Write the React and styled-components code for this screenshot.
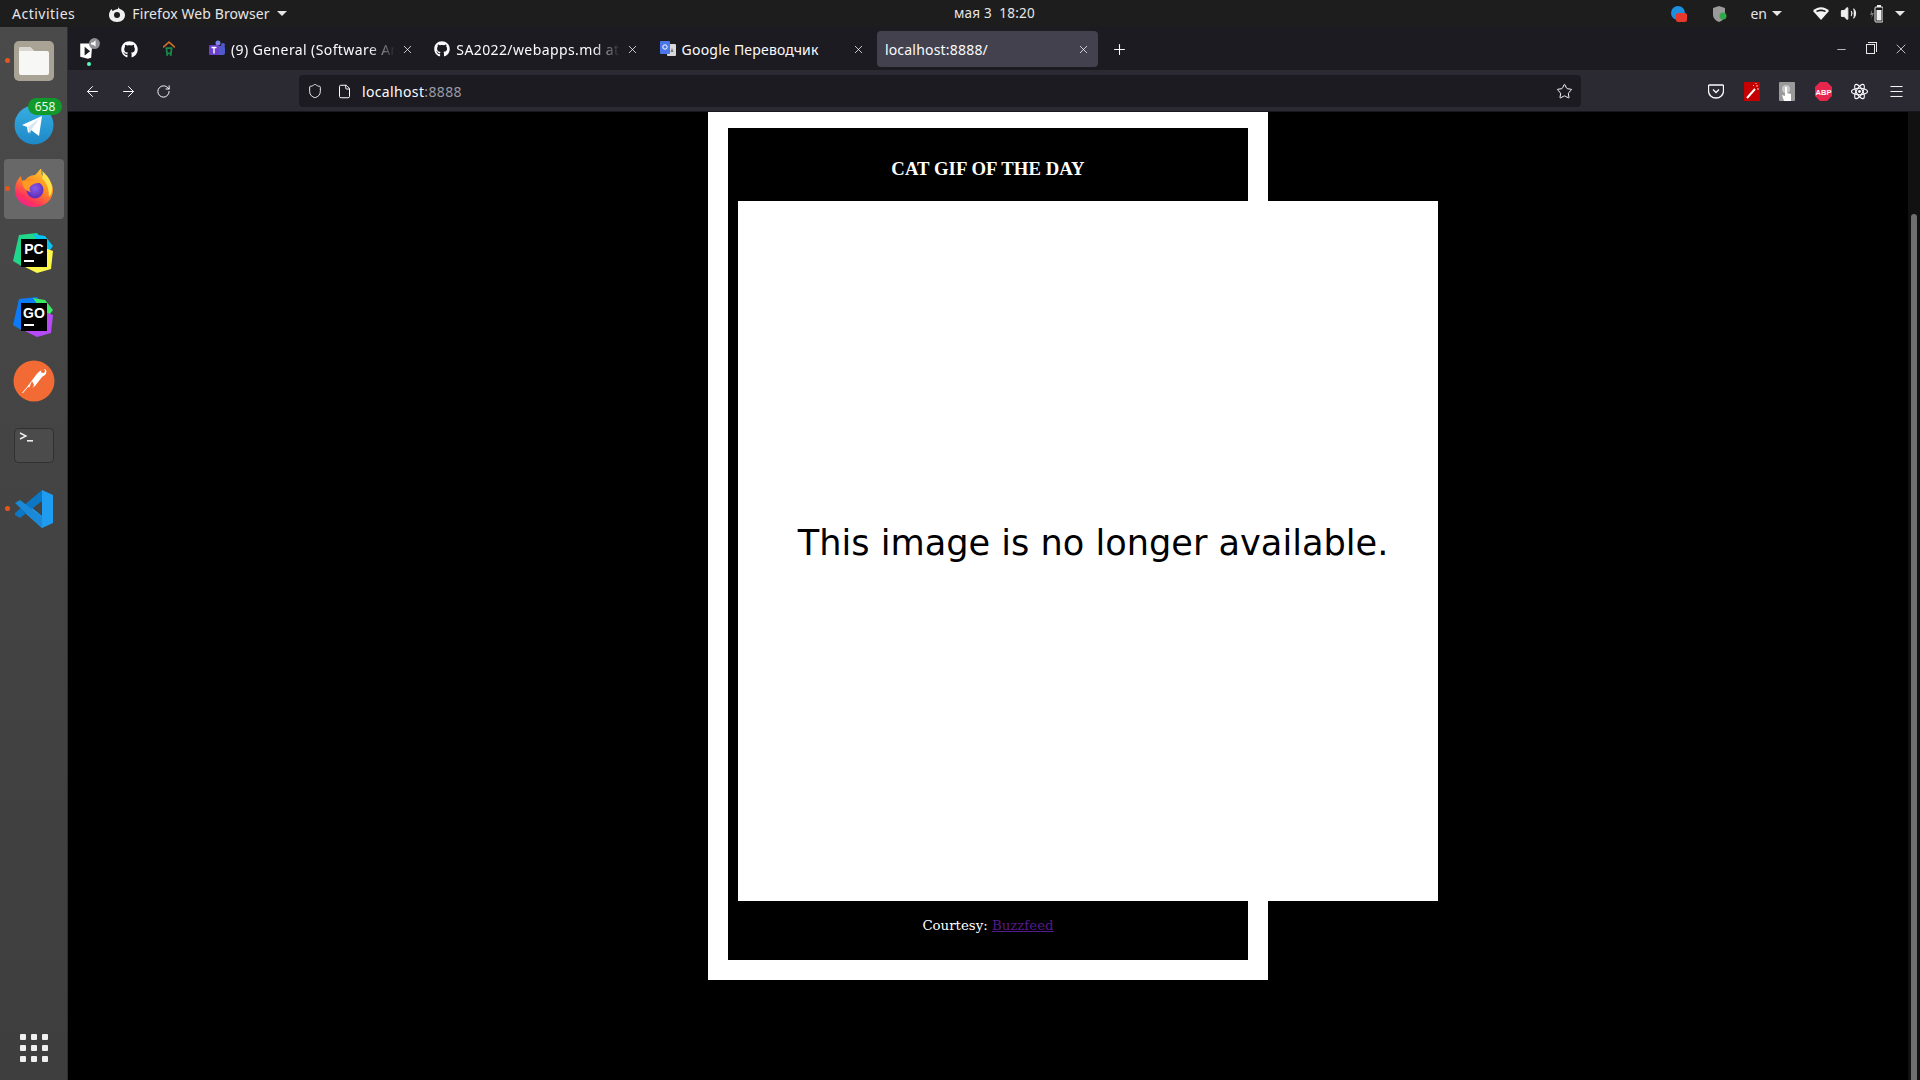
import styled, { createGlobalStyle } from "styled-components";
import { ArrowLeft, ArrowRight, RotateCw, Shield, File, Star, Menu, X, Plus, Minus, Volume2 } from "lucide-react";
import { FaGithub } from "react-icons/fa";

const GlobalStyle = createGlobalStyle`
  html, body { margin: 0; height: 100%; background: #000; overflow: hidden; }
  #root { height: 100%; }
  * { box-sizing: border-box; }
`;

const Screen = styled.div`
  width: 1920px;
  height: 1080px;
  display: flex;
  flex-direction: column;
  font-family: "Noto Sans", sans-serif;
  color: #fff;
`;

const TopBar = styled.div`
  height: 27px;
  flex: none;
  background: #1d1d1d;
  color: #e6e6e6;
  font-size: 14px;
  display: grid;
  grid-template-columns: 1fr 1fr;
  align-items: center;
  position: relative;
  padding: 0 15px 0 12px;
`;

const TopLeft = styled.div`
  display: flex;
  align-items: center;
  letter-spacing: 0.1px;
`;

const Activities = styled.span`
  letter-spacing: 0.5px;
`;

const TopRight = styled.div`
  display: flex;
  align-items: center;
  justify-content: flex-end;
`;

const AppName = styled.div`
  display: flex;
  align-items: center;
  gap: 7px;
  margin-left: 34px;
`;

const Clock = styled.div`
  position: absolute;
  left: 954px;
  top: 4px;
  font-size: 13.5px;
  letter-spacing: 0.2px;
  white-space: pre;
`;

const Caret = styled.span`
  width: 0;
  height: 0;
  border-left: 5px solid transparent;
  border-right: 5px solid transparent;
  border-top: 5px solid #e6e6e6;
  margin-left: ${(p) => p.$left || 0}px;
`;

const TrayItem = styled.div`
  display: flex;
  align-items: center;
  margin-left: ${(p) => p.$left}px;
`;

const Body = styled.div`
  flex: 1;
  display: flex;
  min-height: 0;
`;

const Dock = styled.div`
  width: 68px;
  flex: none;
  background: linear-gradient(#4a4a4a, #444 40%, #3e3e3e);
  border-right: 1px solid #2f2f2f;
  padding-top: 2px;
  display: flex;
  flex-direction: column;
  align-items: center;
`;

const DockSlot = styled.div`
  width: 60px;
  height: 60px;
  flex: none;
  margin: 2px 0 2px 1px;
  display: flex;
  align-items: center;
  justify-content: center;
  position: relative;
  border-radius: 4px;
  background: ${(p) => (p.$active ? "#686868" : "transparent")};
`;

const RunDot = styled.span`
  position: absolute;
  left: 1px;
  top: 50%;
  width: 5px;
  height: 5px;
  margin-top: -3px;
  border-radius: 50%;
  background: #e9541f;
`;

const Badge = styled.span`
  position: absolute;
  left: 24px;
  top: 3px;
  width: 34px;
  height: 17px;
  border-radius: 8.5px;
  background: #109a2c;
  color: #e8ffe8;
  font-size: 12px;
  line-height: 17px;
  text-align: center;
`;

const AppsGrid = styled.div`
  margin-top: auto;
  margin-bottom: 18px;
  display: grid;
  grid-template-columns: repeat(3, 6px);
  gap: 5px;
`;

const AppsDot = styled.span`
  width: 6px;
  height: 6px;
  border-radius: 1px;
  background: #f0f0f0;
`;

const Browser = styled.div`
  flex: 1;
  min-width: 0;
  display: flex;
  flex-direction: column;
`;

const TabStrip = styled.div`
  height: 43px;
  flex: none;
  background: #1c1b22;
  display: flex;
  align-items: center;
  padding: 1px 0 0 1px;
  font-size: 14px;
  letter-spacing: 0.15px;
  color: #fbfbfe;
`;

const PinnedTab = styled.div`
  width: 40px;
  height: 36px;
  flex: none;
  display: flex;
  align-items: center;
  justify-content: center;
  position: relative;
`;

const AudioDot = styled.span`
  position: absolute;
  left: 18px;
  bottom: 1px;
  width: 4px;
  height: 4px;
  border-radius: 50%;
  background: #54ffbd;
`;

const Tab = styled.div`
  width: 221px;
  height: 36px;
  flex: none;
  margin-left: ${(p) => (p.$first ? 12 : 0)}px;
  margin-right: 4.3px;
  padding: 0 8px 0 ${(p) => (p.$active ? 8 : 8)}px;
  display: flex;
  align-items: center;
  gap: 6px;
  border-radius: 4px;
  background: ${(p) => (p.$active ? "#42414d" : "transparent")};
`;

const TabTitle = styled.span`
  flex: 1;
  min-width: 0;
  white-space: nowrap;
  letter-spacing: ${(p) => (p.$fade ? 0.4 : 0.2)}px;
  mask-image: ${(p) => (p.$fade ? "linear-gradient(to right, #000 84%, transparent 100%)" : "none")};
`;

const NewTab = styled.div`
  margin-left: 9px;
  display: flex;
  align-items: center;
`;

const WindowButtons = styled.div`
  margin-left: auto;
  display: flex;
  align-items: center;
  gap: 18px;
  padding-right: 11px;
`;

const RestoreIcon = styled.span`
  width: 9px;
  height: 10px;
  border: 1px solid #e8e8e8;
  position: relative;
  &::after {
    content: "";
    position: absolute;
    left: 1px;
    top: -3px;
    width: 8px;
    height: 9px;
    border-top: 1px solid #e8e8e8;
    border-right: 1px solid #e8e8e8;
  }
`;

const Toolbar = styled.div`
  height: 42px;
  flex: none;
  background: #2b2a33;
  border-bottom: 1px solid #17161b;
  display: flex;
  align-items: center;
  padding: 1px 0 0 16px;
  color: #fbfbfe;
`;

const NavGroup = styled.div`
  display: flex;
  align-items: center;
  gap: 19px;
  margin-right: 128px;
`;

const UrlBar = styled.div`
  width: 1282px;
  height: 32px;
  flex: none;
  border-radius: 4px;
  background: #1c1b22;
  display: flex;
  align-items: center;
  padding: 0 8px;
  gap: 14px;
  font-size: 14px;
`;

const UrlText = styled.div`
  flex: 1;
  margin-left: -4px;
  letter-spacing: 0.35px;
  color: #fbfbfe;
`;

const Port = styled.span`
  color: #9a9aa3;
`;

const Extensions = styled.div`
  display: flex;
  align-items: center;
  margin-left: 127px;
  gap: 19.5px;
`;

const PageRow = styled.div`
  flex: 1;
  min-height: 0;
  display: flex;
  background: #000;
`;

const Page = styled.main`
  flex: 1;
  min-width: 0;
  display: flex;
  justify-content: center;
  align-items: flex-start;
`;

const Card = styled.section`
  width: 560px;
  border: 20px solid #fff;
  border-top-width: 16px;
  background: #000;
`;

const Title = styled.h1`
  margin: 0;
  height: 73px;
  padding-top: 30px;
  text-align: center;
  letter-spacing: 0.06px;
  font: bold 18.72px/22px "Liberation Serif", serif;
`;

const Missing = styled.div`
  width: 700px;
  height: 700px;
  margin-left: 10px;
  padding: 0 0 18px 10px;
  background: #fff;
  color: #000;
  display: flex;
  align-items: center;
  justify-content: center;
  font: 35.15px "DejaVu Sans", sans-serif;
  white-space: nowrap;
`;

const Footer = styled.footer`
  height: 59px;
  padding-top: 17px;
  text-align: center;
  font: 13.33px/16px "DejaVu Serif", serif;
`;

const SourceLink = styled.a`
  color: #551a8b;
`;

const Scrollbar = styled.div`
  width: 12px;
  flex: none;
  background: #111;
  padding: 102px 3px 0;
`;

const Thumb = styled.div`
  height: 100%;
  background: #6f6f6f;
  border-radius: 3px 3px 0 0;
`;

const FirefoxLogo = ({ size = 40 }) => (
  <svg width={size} height={size} viewBox="0 1 40 40">
    <defs>
      <linearGradient id="ffBody" x1="0.8" y1="0" x2="0.2" y2="1">
        <stop offset="0" stopColor="#ffd23a" />
        <stop offset="0.45" stopColor="#ff8a1f" />
        <stop offset="0.8" stopColor="#ff3160" />
        <stop offset="1" stopColor="#e5209a" />
      </linearGradient>
      <radialGradient id="ffCore" cx="0.5" cy="0.4" r="0.6">
        <stop offset="0" stopColor="#8a5ce8" />
        <stop offset="1" stopColor="#5b2bb5" />
      </radialGradient>
    </defs>
    <path d="M27 0c1 3 0 5 1 7 5 3 11 7 11 15 0 10-8 17-19 17C9 39 1 32 1 22 1 16 3 12 7 8c0 3 1 5 3 6 2-4 6-7 11-7 2-2 4-4 6-7z" fill="url(#ffBody)" />
    <circle cx="21" cy="22" r="8.5" fill="url(#ffCore)" />
    <path d="M8 13c3-2 5 1 8 1 5-3 10-2 13 2-4-2-8-1-11 1-3 2-3 5-1 7-5-1-9-5-9-11z" fill="#ff9a24" />
    <path d="M28 3c5 4 10 10 10 18 0 3-1 6-3 8 0-8-2-14-7-19 1-2 1-4 0-7z" fill="#ffe14a" />
  </svg>
);

const FilesLogo = () => (
  <svg width="40" height="40" viewBox="0 0 40 40">
    <rect width="40" height="40" rx="5" fill="#a8a394" />
    <path d="M5 8a2 2 0 0 1 2-2h9l4 4h13a2 2 0 0 1 2 2v20a2 2 0 0 1-2 2H7a2 2 0 0 1-2-2z" fill="#f7f7f5" />
    <path d="M5 8a2 2 0 0 1 2-2h9l4 4H5z" fill="#d9d7d0" />
  </svg>
);

const TelegramLogo = () => (
  <svg width="40" height="40" viewBox="0 0 40 40">
    <defs>
      <linearGradient id="tgBg" x1="0.5" y1="0" x2="0.5" y2="1">
        <stop offset="0" stopColor="#37aee2" />
        <stop offset="1" stopColor="#1e88c7" />
      </linearGradient>
    </defs>
    <circle cx="20" cy="20" r="19.5" fill="url(#tgBg)" />
    <path d="M8 20l20-9-3 20-8-6-3 3-1-6z" fill="#fff" />
    <path d="M14 22l11-8-8 11-1 4z" fill="#d5e6f0" />
  </svg>
);

const IdeLogo = ({ label, a, b, c }) => (
  <svg width="42" height="44" viewBox="0 0 42 44">
    <path d="M6 4l18-2 6 8-6 24-14 2L0 30z" fill={a} />
    <path d="M20 3l12 2 8 10-6 8z" fill={b} />
    <path d="M24 14l16 6-2 18-14 4-12-6z" fill={c} />
    <rect x="8" y="8" width="26" height="28" fill="#000" />
    <text x="21" y="23" textAnchor="middle" fontFamily="Liberation Sans, sans-serif" fontWeight="700" fontSize="14" fill="#fff">{label}</text>
    <rect x="11" y="29" width="10" height="2" fill="#fff" />
  </svg>
);

const PostmanLogo = () => (
  <svg width="42" height="42" viewBox="0 0 42 42">
    <circle cx="21" cy="21" r="20.5" fill="#f26b34" />
    <path d="M9 33l5-6 9-12c2-3 5-5 8-6 3 0 3 4 1 6l-3 2-7 9-3 2-4-1-5 6z" fill="#fff" />
    <path d="M16 28l3-7 2 4-2 4z" fill="#f26b34" />
    <circle cx="30" cy="11" r="2" fill="#f26b34" />
  </svg>
);

const TerminalLogo = () => (
  <svg width="40" height="35" viewBox="0 0 40 35">
    <rect x="0.5" y="0.5" width="39" height="34" rx="4" fill="#4b4b4b" stroke="#303030" />
    <path d="M6 5l6 3-6 3" fill="none" stroke="#eee" strokeWidth="1.4" />
    <rect x="13" y="12" width="6" height="1.6" fill="#eee" />
  </svg>
);

const VsCodeLogo = () => (
  <svg width="40" height="38" viewBox="0 0 40 38">
    <path d="M28 0l11 5v28l-11 5-18-16 7-5 11 9V11z" fill="#1f9cf0" />
    <path d="M28 0v11L6 28l-5-3v-2z" fill="#0c77c4" />
    <path d="M1 13l5-3 22 17v11z" fill="#1a8ad8" />
  </svg>
);

const FirefoxMark = () => (
  <svg width="16" height="16" viewBox="0 0 16 16">
    <path d="M9 0c0 2 1 2 2 3 3 1 5 3 5 6 0 4-3 7-8 7s-8-3-8-7c0-2 1-5 3-6 0 1 0 2 1 2 1-1 3-2 5-2z" fill="#f0f0f0" />
    <circle cx="8" cy="9" r="3" fill="#1d1d1d" />
  </svg>
);

const TrayBrowser = () => (
  <svg width="16" height="18" viewBox="0 0 16 18">
    <circle cx="7" cy="8" r="7" fill="#1d8fe1" />
    <rect x="5" y="8" width="11" height="9" rx="2" fill="#e8392f" />
  </svg>
);

const TrayShield = () => (
  <svg width="14" height="18" viewBox="0 0 14 18">
    <path d="M6 1l6 2v7c0 3-3 6-6 7-3-1-6-4-6-7V3z" fill="#9a9a9a" />
    <circle cx="10" cy="11" r="3.5" fill="#2eaa4a" />
  </svg>
);

const TrayWifi = () => (
  <svg width="16" height="13" viewBox="0 0 16 13">
    <path d="M8 13L0 4c4-5 12-5 16 0z" fill="#f4f4f4" />
    <path d="M3 4c3-2 7-2 10 0l-1 1c-2-1-6-1-8 0z" fill="#1d1d1d" />
  </svg>
);

const TrayBattery = () => (
  <svg width="14" height="18" viewBox="0 0 14 18">
    <path d="M3 5L1 10h2l-1 4 3-6H3z" fill="#777" />
    <rect x="6" y="2" width="8" height="15" rx="1" fill="none" stroke="#f0f0f0" />
    <rect x="8" y="0" width="4" height="2" fill="#f0f0f0" />
    <rect x="7.5" y="5" width="5" height="10.5" fill="#f0f0f0" />
  </svg>
);

const PinnedPlayer = () => (
  <svg width="24" height="22" viewBox="-2 0 22 20">
    <path d="M1 5h11l-1 13-3 1-7-2z" fill="#fff" />
    <path d="M5 8l5 4-5 4z" fill="#1c1b22" />
    <circle cx="14" cy="5" r="5" fill="#8f8f96" />
    <path d="M11 4h2l2-2v6l-2-2h-2z" fill="#fff" />
  </svg>
);

const PinnedHouse = () => (
  <svg width="12" height="16" viewBox="0 0 14 18">
    <path d="M0 7l7-6 7 6" fill="none" stroke="#c96f28" strokeWidth="2" />
    <path d="M3 8h8M4 8l1 9M10 8l-1 9M4 14h6" fill="none" stroke="#178a4a" strokeWidth="2" />
  </svg>
);

const TeamsIcon = () => (
  <svg width="16" height="18" viewBox="0 0 16 18">
    <circle cx="9" cy="3" r="2.5" fill="#7b83eb" />
    <circle cx="14" cy="5" r="2" fill="#5059c9" />
    <rect x="6" y="6" width="10" height="9" rx="2" fill="#5059c9" />
    <rect x="0" y="5" width="10" height="10" rx="1" fill="#6a3fd0" />
    <path d="M2.5 7.5h5M5 7.5v6" stroke="#fff" strokeWidth="1.4" />
  </svg>
);

const TranslateIcon = () => (
  <svg width="16" height="16" viewBox="0 0 16 16">
    <rect x="7" y="3" width="9" height="12" rx="1" fill="#d8d8d8" />
    <rect x="0" y="0" width="10" height="13" rx="1" fill="#4a76e8" />
    <circle cx="5" cy="6" r="2.2" fill="none" stroke="#fff" strokeWidth="1" />
    <path d="M12 7l1.5 4h-3z" fill="#777" />
  </svg>
);

const PocketIcon = () => (
  <svg width="16" height="16" viewBox="0 0 16 16" fill="none" stroke="#fbfbfe" strokeWidth="1.3">
    <path d="M1.5 2h13a1 1 0 0 1 1 1v5a7.5 7 0 0 1-15 0V3a1 1 0 0 1 1-1z" />
    <path d="M5 6.5L8 9.5l3-3" />
  </svg>
);

const WandIcon = () => (
  <svg width="16" height="19" viewBox="0 0 16 19">
    <rect width="16" height="19" fill="#c40000" />
    <path d="M3 16l8-9" stroke="#fff" strokeWidth="2" />
    <path d="M13 3v2M9 3l1 1M15 7h-2M12 1v1" stroke="#f4c8c8" strokeWidth="1" />
  </svg>
);

const TouchIcon = () => (
  <svg width="16" height="19" viewBox="0 0 16 19">
    <rect width="16" height="19" rx="1" fill="#9a9a9a" />
    <circle cx="7" cy="7" r="4" fill="#c8c8c8" />
    <path d="M6 5h2v6l4 1v7H5l-2-6 3 1z" fill="#fff" />
  </svg>
);

const AbpIcon = () => (
  <svg width="17" height="19" viewBox="0 0 17 19">
    <path d="M5 0h7l5 5v9l-5 5H5l-5-5V5z" fill="#e8264d" />
    <text x="8.5" y="12.5" textAnchor="middle" fontFamily="Liberation Sans, sans-serif" fontWeight="700" fontSize="7.5" fill="#fff">ABP</text>
  </svg>
);

const AtomIcon = () => (
  <svg width="17" height="17" viewBox="0 0 17 17" fill="none" stroke="#fbfbfe" strokeWidth="1.1">
    <ellipse cx="8.5" cy="8.5" rx="8" ry="3.2" />
    <ellipse cx="8.5" cy="8.5" rx="8" ry="3.2" transform="rotate(60 8.5 8.5)" />
    <ellipse cx="8.5" cy="8.5" rx="8" ry="3.2" transform="rotate(120 8.5 8.5)" />
    <circle cx="8.5" cy="8.5" r="1.4" fill="#fbfbfe" stroke="none" />
  </svg>
);

const dockApps = [
  { key: "files", logo: <FilesLogo />, running: true },
  { key: "telegram", logo: <TelegramLogo />, badge: "658" },
  { key: "firefox", logo: <FirefoxLogo />, running: true, active: true },
  { key: "pycharm", logo: <IdeLogo label="PC" a="#21d789" b="#07c3f2" c="#fcf84a" /> },
  { key: "goland", logo: <IdeLogo label="GO" a="#0d7bf7" b="#3bea62" c="#b74af7" /> },
  { key: "postman", logo: <PostmanLogo /> },
  { key: "terminal", logo: <TerminalLogo /> },
  { key: "vscode", logo: <VsCodeLogo />, running: true },
];

const tabs = [
  { icon: <TeamsIcon />, title: "(9) General (Software Arc", fade: true },
  { icon: <FaGithub size={16} />, title: "SA2022/webapps.md at m", fade: true },
  { icon: <TranslateIcon />, title: "Google Переводчик" },
];

export default function App() {
  return (
    <Screen>
      <GlobalStyle />
      <TopBar>
        <TopLeft>
          <Activities>Activities</Activities>
          <AppName>
            <FirefoxMark />
            <span>Firefox Web Browser</span>
            <Caret />
          </AppName>
        </TopLeft>
        <Clock>мая 3  18:20</Clock>
        <TopRight>
          <TrayBrowser />
          <TrayItem $left={26}><TrayShield /></TrayItem>
          <TrayItem $left={23}>en<Caret $left={5} /></TrayItem>
          <TrayItem $left={31}><TrayWifi /></TrayItem>
          <TrayItem $left={11}><Volume2 size={17} fill="#f0f0f0" strokeWidth={1.6} /></TrayItem>
          <TrayItem $left={12}><TrayBattery /></TrayItem>
          <TrayItem $left={12}><Caret /></TrayItem>
        </TopRight>
      </TopBar>
      <Body>
        <Dock>
          {dockApps.map((app) => (
            <DockSlot key={app.key} $active={app.active}>
              {app.running && <RunDot />}
              {app.logo}
              {app.badge && <Badge>{app.badge}</Badge>}
            </DockSlot>
          ))}
          <AppsGrid>
            {Array.from({ length: 9 }, (_, i) => <AppsDot key={i} />)}
          </AppsGrid>
        </Dock>
        <Browser>
          <TabStrip>
            <PinnedTab>
              <PinnedPlayer />
              <AudioDot />
            </PinnedTab>
            <PinnedTab><FaGithub size={17} /></PinnedTab>
            <PinnedTab><PinnedHouse /></PinnedTab>
            {tabs.map((tab, i) => (
              <Tab key={tab.title} $first={i === 0}>
                {tab.icon}
                <TabTitle $fade={tab.fade}>{tab.title}</TabTitle>
                <X size={13} strokeWidth={1.4} />
              </Tab>
            ))}
            <Tab $active>
              <TabTitle>localhost:8888/</TabTitle>
              <X size={13} strokeWidth={1.4} />
            </Tab>
            <NewTab><Plus size={17} strokeWidth={1.5} /></NewTab>
            <WindowButtons>
              <Minus size={13} strokeWidth={1.3} />
              <RestoreIcon />
              <X size={16} strokeWidth={1.1} />
            </WindowButtons>
          </TabStrip>
          <Toolbar>
            <NavGroup>
              <ArrowLeft size={17} strokeWidth={1.4} />
              <ArrowRight size={17} strokeWidth={1.4} />
              <RotateCw size={15} strokeWidth={1.6} />
            </NavGroup>
            <UrlBar>
              <Shield size={16} strokeWidth={1.4} />
              <File size={15} strokeWidth={1.6} />
              <UrlText>localhost<Port>:8888</Port></UrlText>
              <Star size={17} strokeWidth={1.4} />
            </UrlBar>
            <Extensions>
              <PocketIcon />
              <WandIcon />
              <TouchIcon />
              <AbpIcon />
              <AtomIcon />
              <Menu size={17} strokeWidth={1.4} />
            </Extensions>
          </Toolbar>
          <PageRow>
            <Page>
              <Card>
                <Title>CAT GIF OF THE DAY</Title>
                <Missing>This image is no longer available.</Missing>
                <Footer>
                  Courtesy: <SourceLink href="#buzzfeed">Buzzfeed</SourceLink>
                </Footer>
              </Card>
            </Page>
            <Scrollbar><Thumb /></Scrollbar>
          </PageRow>
        </Browser>
      </Body>
    </Screen>
  );
}
